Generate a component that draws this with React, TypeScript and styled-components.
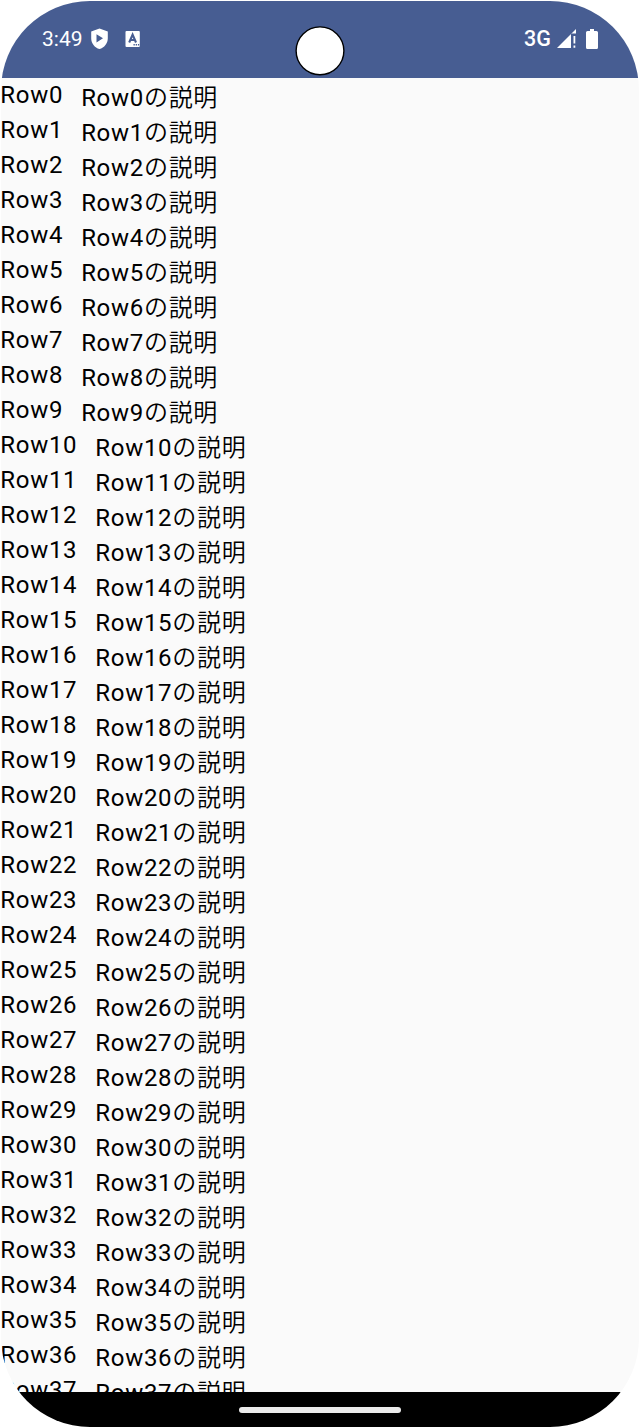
import React from 'react';
import styled, { createGlobalStyle } from 'styled-components';

const GlobalStyle = createGlobalStyle`
  * { box-sizing: border-box; }
  body { margin: 0; background: #fff; }
`;

const Stage = styled.div`
  width: 640px;
  height: 1428px;
  padding: 1px;
  background: #fff;
`;

const Screen = styled.main`
  position: relative;
  display: flex;
  flex-direction: column;
  height: 1426px;
  overflow: hidden;
  border-radius: 89px;
  background: #fafafa;
  font-family: Roboto, 'Noto Sans CJK JP', sans-serif;
`;

const StatusBar = styled.header`
  flex: none;
  display: flex;
  align-items: center;
  justify-content: space-between;
  height: 77px;
  padding: 0 41px 2px;
  background: #475d92;
  color: #fff;
`;

const StatusGroup = styled.div`
  display: flex;
  align-items: center;
  height: 24px;
`;

const Clock = styled.span`
  width: 48px;
  font-size: 21px;
  line-height: 24px;
`;

const Network = styled.span`
  width: 33px;
  font-size: 21.5px;
  font-weight: 500;
  line-height: 26px;
`;

const Icon = styled.svg<{ $gap?: number }>`
  display: block;
  margin-left: ${(p) => p.$gap ?? 0}px;
`;

const Camera = styled.svg`
  position: absolute;
  top: 24px;
  left: 294px;
`;

const List = styled.ul`
  flex: 1;
  min-height: 0;
  margin: 0;
  padding: 0;
  overflow: hidden;
  list-style: none;
`;

const Row = styled.li`
  display: flex;
  gap: 18px;
  height: 35px;
  margin-left: -0.7px;
  color: #000;
  font-size: 24px;
  line-height: 35px;
  letter-spacing: 0.7px;
  white-space: nowrap;
`;

const Title = styled.span`
  height: 35px;
`;

const Description = styled.span`
  height: 35px;
  padding-top: 3px;
`;

const Suffix = styled.span`
  font-weight: 350;
`;

const NavigationBar = styled.footer`
  flex: none;
  display: flex;
  justify-content: center;
  height: 35px;
  padding-top: 15px;
  background: #000;
`;

const Handle = styled.div`
  width: 162px;
  height: 6px;
  border-radius: 3px;
  background: #ebebeb;
`;

const rows = Array.from({ length: 38 }, (_, i) => `Row${i}`);

export default function App() {
  return (
    <Stage>
      <GlobalStyle />
      <Screen>
        <StatusBar>
          <StatusGroup>
            <Clock>3:49</Clock>
            <Icon width="18" height="22" viewBox="0 0 18 22">
              <path fill="#fff" fillRule="evenodd" d="M9.5 .4 17.8 3.4V10.2C17.8 15.4 14.3 19.7 9.5 21.1 4.7 19.7 1.2 15.4 1.2 10.2V3.4ZM6.5 6.2V14.4L13 10.3Z" />
            </Icon>
            <Icon $gap={17} width="16" height="16" viewBox="0 0 16 16">
              <g transform="translate(.5 0)">
                <rect width="14.3" height="16" rx="1" fill="#fff" />
                <path d="M3.7 11.5 7.1 3.7 10.5 11.5M5 9H9.2" fill="none" stroke="#475d92" strokeWidth="2.1" />
                <path d="M8 13h1.3v1.4H8zM10.2 13h1.3v1.4h-1.3zM12.4 13h1.3v1.4h-1.3z" fill="#475d92" />
              </g>
            </Icon>
          </StatusGroup>
          <StatusGroup>
            <Network>3G</Network>
            <Icon width="20" height="20" viewBox="0 0 20 20">
              <path fill="#fff" d="M0 19 19 0V4.5H14V19ZM16.5 7H18.3V14.5H16.5ZM16.5 16.5H18.3V18.7H16.5Z" />
            </Icon>
            <Icon $gap={9} width="12" height="20" viewBox="0 0 12 20">
              <path fill="#fff" d="M4 0H8V2H10.5Q12 2 12 3.5V18.5Q12 20 10.5 20H1.5Q0 20 0 18.5V3.5Q0 2 1.5 2H4Z" />
            </Icon>
          </StatusGroup>
        </StatusBar>
        <List>
          {rows.map((name) => (
            <Row key={name}>
              <Title>{name}</Title>
              <Description>
                {name}
                <Suffix>の説明</Suffix>
              </Description>
            </Row>
          ))}
        </List>
        <NavigationBar>
          <Handle />
        </NavigationBar>
        <Camera width="50" height="52" viewBox="0 0 50 52">
          <circle cx="25" cy="25.8" r="23.9" fill="#fff" stroke="#000" strokeWidth="1.4" />
        </Camera>
      </Screen>
    </Stage>
  );
}
